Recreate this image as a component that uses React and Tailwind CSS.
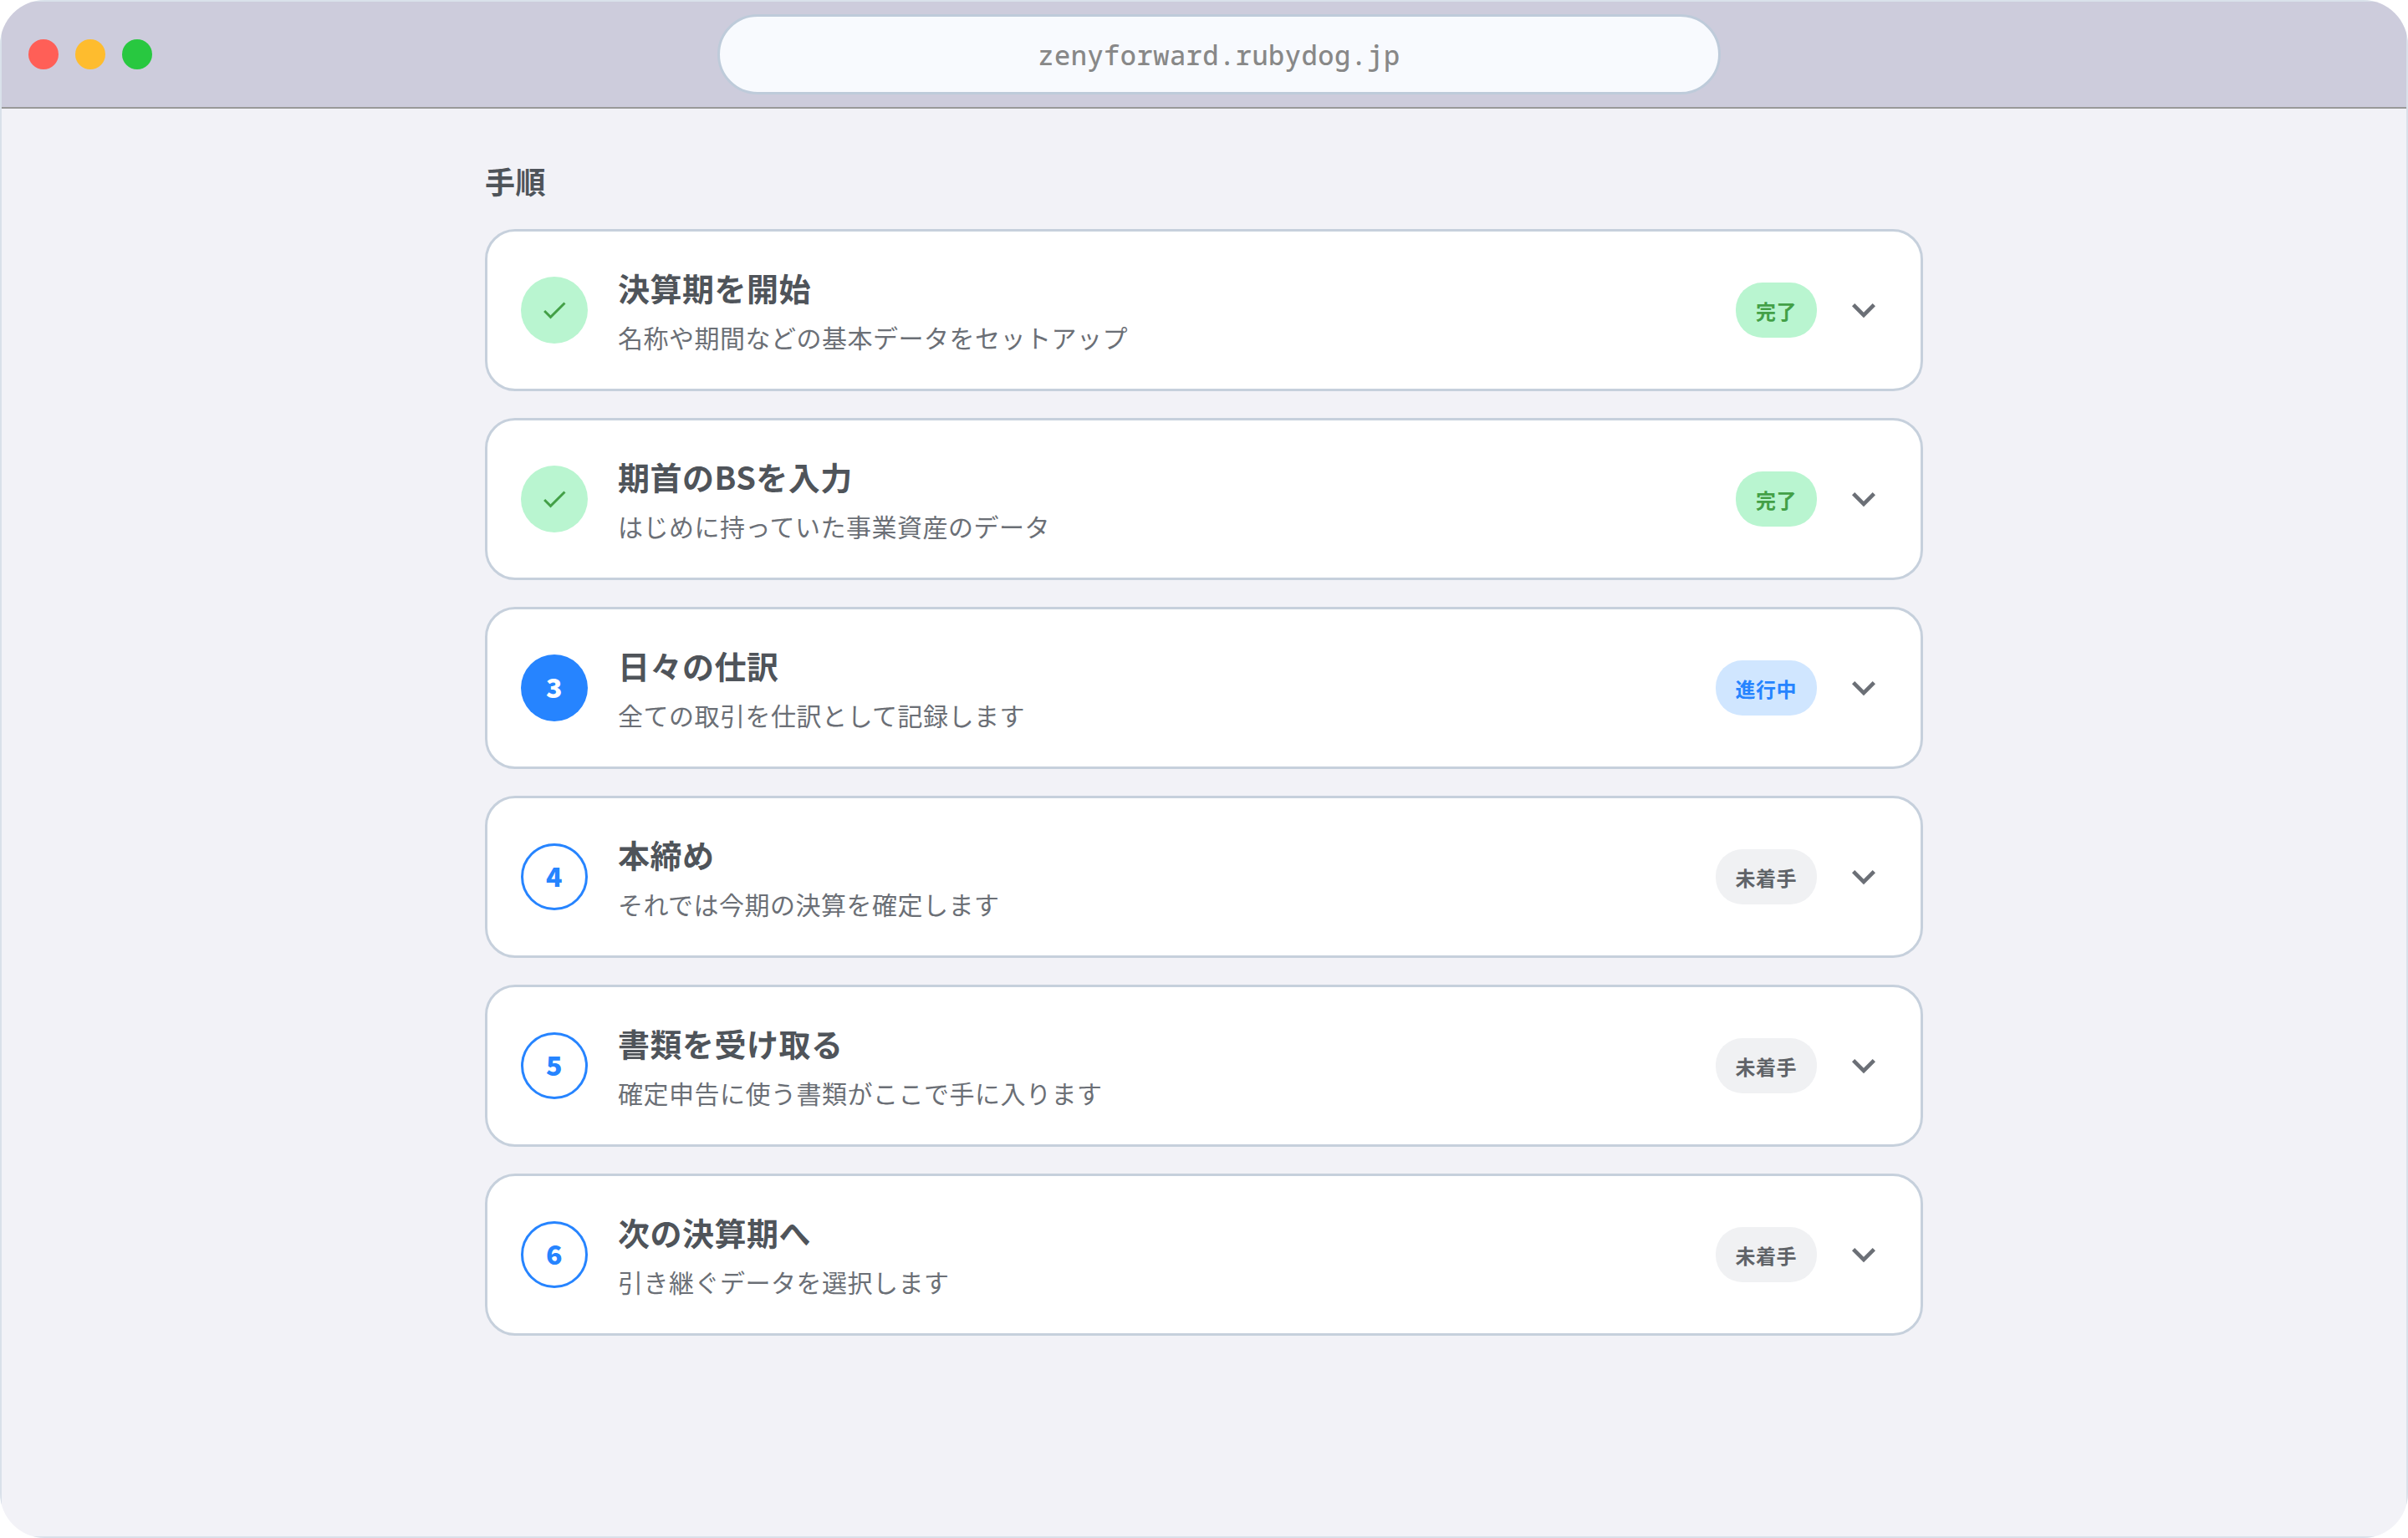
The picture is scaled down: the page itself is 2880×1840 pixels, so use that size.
import React from 'react';
import clsx from 'clsx';

const steps = [
  { title: '決算期を開始', text: '名称や期間などの基本データをセットアップ', status: 'done' },
  { title: '期首のBSを入力', text: 'はじめに持っていた事業資産のデータ', status: 'done' },
  { title: '日々の仕訳', text: '全ての取引を仕訳として記録します', status: 'active' },
  { title: '本締め', text: 'それでは今期の決算を確定します', status: 'todo' },
  { title: '書類を受け取る', text: '確定申告に使う書類がここで手に入ります', status: 'todo' },
  { title: '次の決算期へ', text: '引き継ぐデータを選択します', status: 'todo' },
];

const statusMap = {
  done: {
    label: '完了',
    badge: 'bg-[#b9f5d0] text-[#43a047]',
    circle: 'bg-[#b9f5d0] text-[#43a047]',
  },
  active: {
    label: '進行中',
    badge: 'bg-[#d0e6ff] text-[#2684ff]',
    circle: 'bg-[#2684ff] pb-1 text-white',
  },
  todo: {
    label: '未着手',
    badge: 'bg-[#f0f1f3] text-[#5f6368]',
    circle: 'border-3 border-[#2684ff] pb-1 text-[#2684ff]',
  },
};

const CheckIcon = () => (
  <svg viewBox="0 0 24 24" fill="currentColor" className="size-9">
    <path d="M9 16.2 4.8 12l-1.4 1.4L9 19 21 7l-1.4-1.4z" />
  </svg>
);

const ExpandIcon = () => (
  <svg viewBox="0 0 24 24" fill="currentColor" className="size-14 shrink-0 text-[#6b6f76]">
    <path d="M16.59 8.59 12 13.17 7.41 8.59 6 10l6 6 6-6z" />
  </svg>
);

const StepCard = ({ number, title, text, status }) => {
  const s = statusMap[status];

  return (
    <li className="flex h-[194px] items-center rounded-[36px] border-3 border-[#c6d0dc] bg-white px-10">
      <div className={clsx('flex size-20 shrink-0 items-center justify-center rounded-full text-[32px] font-black', s.circle)}>
        {status === 'done' ? <CheckIcon /> : number}
      </div>
      <div className="ml-9 flex-1 pt-0.5">
        <h2 className="text-[38px] leading-[62px] font-bold text-[#4f545a]">{title}</h2>
        <p className="text-[30px] leading-[56px] text-[#6b6f76]">{text}</p>
      </div>
      <span className={clsx('mr-7 flex h-[66px] items-center rounded-[32px] px-6 pt-0.5 text-2xl font-bold', s.badge)}>
        {s.label}
      </span>
      <ExpandIcon />
    </li>
  );
};

const TitleBar = () => (
  <header className="flex h-32 items-center border-b-2 border-[#999999] bg-[#cdccdc] pl-8">
    <div className="flex gap-5">
      <span className="size-9 rounded-full bg-[#ff5f57]" />
      <span className="size-9 rounded-full bg-[#febc2e]" />
      <span className="size-9 rounded-full bg-[#28c840]" />
    </div>
    <div className="ml-[676px] flex h-24 w-[1200px] items-center justify-center rounded-full border-3 border-[#becbda] bg-[#f8fafe] pt-0.5 font-['Noto_Sans_Mono','DejaVu_Sans_Mono',monospace] text-[32px] font-medium text-[#888888]">
      zenyforward.rubydog.jp
    </div>
  </header>
);

const App = () => (
  <div className="h-[1840px] w-[2880px] overflow-hidden rounded-[54px] font-['Noto_Sans_CJK_JP',sans-serif] tracking-[0.5px]">
    <div className="h-full border-2 border-[#d9e1ea] bg-[#f2f2f7]">
      <TitleBar />
      <main className="mx-auto w-[1720px] pt-[59px]">
        <h1 className="text-4xl leading-[54px] font-bold text-[#4f545a]">手順</h1>
        <ul className="mt-[31px] flex flex-col gap-8">
          {steps.map((step, i) => (
            <StepCard key={step.title} number={i + 1} {...step} />
          ))}
        </ul>
      </main>
    </div>
  </div>
);

export default App;
